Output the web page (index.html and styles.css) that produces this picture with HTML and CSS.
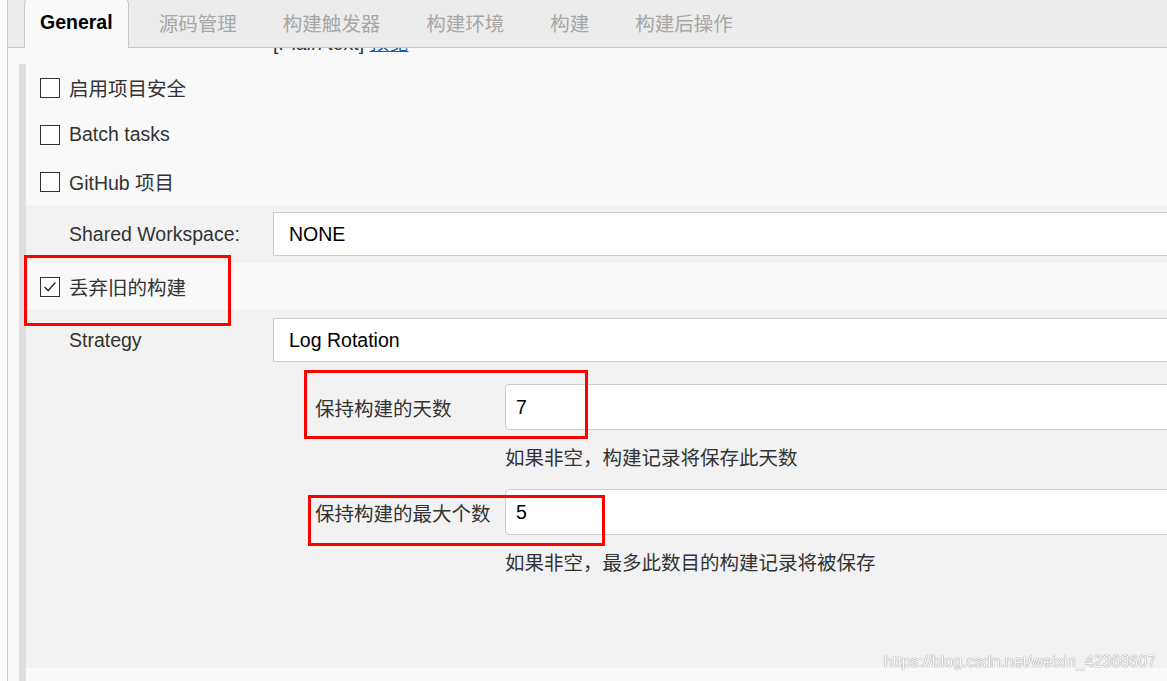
FILE: index.html
```html
<!DOCTYPE html>
<html lang="zh-CN">
<head>
    <meta charset="UTF-8">
    <title>General - 配置</title>
    <link rel="stylesheet" href="styles.css">
</head>
<body>

    <div class="page">
        <!-- 标签页 -->
        <div class="tabs">
            <div class="tab active">General</div>
            <div class="tab">源码管理</div>
            <div class="tab">构建触发器</div>
            <div class="tab">构建环境</div>
            <div class="tab">构建</div>
            <div class="tab">构建后操作</div>
        </div>

        <div class="content">
            <div class="preview-line">[Plain text] <a href="#">预览</a></div>

            <div class="section">
                <label class="check-row"><span class="box"></span>启用项目安全</label>
                <label class="check-row"><span class="box"></span>Batch tasks</label>
                <label class="check-row"><span class="box"></span>GitHub 项目</label>

                <div class="field-row shaded">
                    <span class="label">Shared Workspace:</span>
                    <div class="select">NONE</div>
                </div>

                <label class="check-row">
                    <span class="box"><svg viewBox="0 0 20 20" width="18" height="18"><polyline points="4,10 8,14 16,5" fill="none" stroke="#333" stroke-width="1.6"/></svg></span>丢弃旧的构建
                </label>

                <div class="nested">
                    <div class="field-row">
                        <span class="label">Strategy</span>
                        <div class="select">Log Rotation</div>
                    </div>

                    <div class="sub-fields">
                        <span class="sub-label">保持构建的天数</span>
                        <div class="input">7</div>
                        <span></span>
                        <div class="help">如果非空，构建记录将保存此天数</div>

                        <span class="sub-label">保持构建的最大个数</span>
                        <div class="input">5</div>
                        <span></span>
                        <div class="help">如果非空，最多此数目的构建记录将被保存</div>
                    </div>
                </div>

                <label class="check-row"><span class="box"></span></label>
            </div>
        </div>

        <!-- 标注框 -->
        <div class="mark mark-discard"></div>
        <div class="mark mark-days"></div>
        <div class="mark mark-max"></div>
    </div>

    <div class="watermark">https://blog.csdn.net/weixin_42368607</div>

</body>
</html>
```

FILE: styles.css
```css
body {
    margin: 0;
    height: 681px;
    overflow: hidden;
    background: #fbfbfb;
    font-family: "Liberation Sans", "Noto Sans CJK SC", sans-serif;
    font-size: 19.5px;
    color: #333;
}
.page {
    position: relative;
    width: 1240px;
    margin-left: 7px;
    border-left: 1px solid #c8c8c8;
    height: 681px;
    display: flex;
    flex-direction: column;
}
.tabs {
    display: flex;
    height: 47px;
    padding-left: 16px;
    background: #ececec;
    border-bottom: 1px solid #c8c8c8;
}
.tab {
    display: flex;
    align-items: center;
    padding: 0 16px 3px;
    margin-right: 14px;
    color: #a6a6a6;
}
.tab.active {
    margin-top: -3px;
    margin-bottom: -1px;
    padding: 0 15px 2px;
    background: #f9f9f9;
    border: 1px solid #c8c8c8;
    border-bottom: none;
    border-radius: 7px 7px 0 0;
    color: #000;
    font-weight: bold;
}
.content {
    flex: 1;
    overflow: hidden;
    background: #f9f9f9;
}
.preview-line {
    margin-top: -17px;
    padding-left: 265px;
    line-height: 24px;
    height: 24px;
}
.preview-line a {
    color: #1a5dba;
}
.section {
    margin-top: 9px;
    margin-left: 11px;
    border-left: 7px solid #dedede;
}
.check-row {
    display: flex;
    align-items: center;
    height: 47px;
    padding-left: 14px;
}
.box {
    width: 18px;
    height: 18px;
    border: 1px solid #333;
    background: #fff;
    margin-right: 9px;
    display: flex;
    align-items: center;
    justify-content: center;
}
.field-row {
    display: flex;
    align-items: center;
    padding: 7px 0 7px 43px;
}
.field-row.shaded {
    background: #f2f2f2;
}
.label {
    width: 204px;
    flex: none;
}
.select {
    flex: 1;
    height: 42px;
    line-height: 42px;
    padding-left: 15px;
    background: #fff;
    border: 1px solid #cccccc;
    color: #000;
}
.nested {
    background: #f2f2f2;
    padding: 1px 0 93px;
}
.nested .field-row {
    padding-bottom: 0;
}
.sub-fields {
    display: grid;
    grid-template-columns: 190px 1fr;
    align-items: center;
    padding-left: 289px;
    margin-top: 22px;
}
.input {
    height: 44px;
    line-height: 44px;
    padding-left: 10px;
    background: #fff;
    border: 1px solid #cccccc;
    border-radius: 4px;
    color: #000;
}
.help {
    padding: 16px 0 19px;
    line-height: 24px;
}
.sub-fields .help:last-child {
    padding-bottom: 0;
}
.mark {
    position: absolute;
    border: 3px solid #ff0000;
    box-sizing: border-box;
}
.mark-discard {
    left: 16px;
    top: 255px;
    width: 207px;
    height: 71px;
}
.mark-days {
    left: 296px;
    top: 370px;
    width: 284px;
    height: 69px;
}
.mark-max {
    left: 300px;
    top: 495px;
    width: 297px;
    height: 51px;
}
.watermark {
    position: fixed;
    right: 11px;
    top: 653px;
    font-size: 16px;
    color: rgba(255, 255, 255, 0.95);
    text-shadow: 0 0 1px #8a8a8a, 0 0 1px #8a8a8a;
}
```
